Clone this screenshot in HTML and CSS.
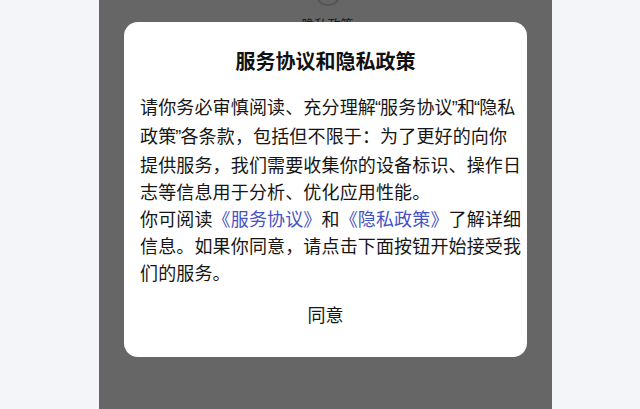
FILE: index.html
```html
<!DOCTYPE html>
<html lang="zh-CN">
<head>
    <meta charset="UTF-8">
    <meta name="viewport" content="width=device-width, initial-scale=1.0">
    <title>服务协议和隐私政策</title>
    <link rel="stylesheet" href="styles.css">
</head>
<body>
    <div class="side side-left"></div>

    <div class="phone">
        <!-- страница под затемнением -->
        <div class="behind">
            <div class="behind-icon"></div>
            <div class="behind-label">隐私政策</div>
        </div>

        <div class="dialog">
            <h2 class="dialog-title">服务协议和隐私政策</h2>
            <p class="dialog-text">
                请你务必审慎阅读、充分理解<span class="q">“</span>服务协议<span class="q">”</span>和<span class="q">“</span>隐私<br>
                政策<span class="q">”</span>各条款，包括但不限于：为了更好的向你<br>
                提供服务，我们需要收集你的设备标识、操作日<br>
                志等信息用于分析、优化应用性能。<br>
                你可阅读<a class="link" href="#">《服务协议》</a>和<a class="link" href="#">《隐私政策》</a>了解详细<br>
                信息。如果你同意，请点击下面按钮开始接受我<br>
                们的服务。
            </p>
            <button class="dialog-button">同意</button>
        </div>
    </div>

    <div class="side side-right"></div>
</body>
</html>
```

FILE: styles.css
```css
html, body {
    height: 100%;
}
body {
    margin: 0;
    padding: 0;
    display: flex;
    background-color: #f3f5f9;
    font-family: "Noto Sans CJK SC", "Noto Sans", sans-serif;
    overflow: hidden;
}
.side {
    background-color: #f3f5f9;
}
.side-left {
    width: 99px;
}
.side-right {
    flex: 1;
}
.phone {
    position: relative;
    width: 453px;
    height: 409px;
    background-color: #666667;
    overflow: hidden;
}
.behind {
    display: flex;
    flex-direction: column;
    align-items: center;
    margin-top: -20px;
    margin-left: 4px;
}
.behind-icon {
    width: 22px;
    height: 22px;
    border: 2px solid #555556;
    border-radius: 50%;
}
.behind-label {
    margin-top: 10px;
    font-size: 13px;
    line-height: 16px;
    color: #1a1a1a;
}
.dialog {
    position: absolute;
    top: 22px;
    left: 25px;
    width: 403px;
    height: 335px;
    box-sizing: border-box;
    background-color: #ffffff;
    border-radius: 14px;
    padding: 25px 16px 0;
    display: flex;
    flex-direction: column;
}
.dialog-title {
    margin: 0;
    font-size: 20px;
    line-height: 28px;
    font-weight: 700;
    color: #111111;
    text-align: center;
}
.dialog-text {
    margin: 18px 0 0;
    font-size: 18px;
    line-height: 27px;
    letter-spacing: 0.15px;
    color: #161616;
    white-space: nowrap;
}
.q {
    font-family: "Liberation Sans", sans-serif;
    margin: 0 -1px;
}
.link {
    color: #4552c4;
    text-decoration: none;
}
.dialog-button {
    margin-top: 14px;
    background: none;
    border: none;
    padding: 0;
    font-family: inherit;
    font-size: 18px;
    line-height: 29px;
    color: #161616;
    cursor: pointer;
}
```
